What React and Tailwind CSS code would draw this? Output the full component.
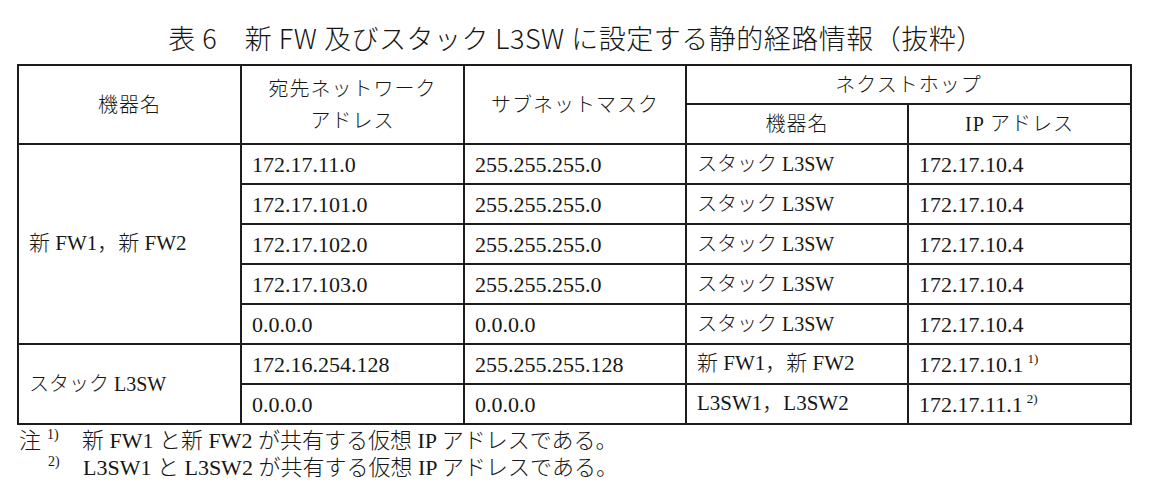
import React from "react";

const serif = "font-['Liberation_Serif','Noto_Sans_CJK_JP',serif]";

const rows = [
  ["172.17.11.0", "255.255.255.0", "スタック L3SW", "172.17.10.4"],
  ["172.17.101.0", "255.255.255.0", "スタック L3SW", "172.17.10.4"],
  ["172.17.102.0", "255.255.255.0", "スタック L3SW", "172.17.10.4"],
  ["172.17.103.0", "255.255.255.0", "スタック L3SW", "172.17.10.4"],
  ["0.0.0.0", "0.0.0.0", "スタック L3SW", "172.17.10.4"],
];

const l3Rows = [
  ["172.16.254.128", "255.255.255.128", "新 FW1，新 FW2", "172.17.10.1", "1)"],
  ["0.0.0.0", "0.0.0.0", "L3SW1，L3SW2", "172.17.11.1", "2)"],
];

const cell = "border-2 border-[#1c1c1c] px-[10px] text-left align-middle font-light";
const num = `${cell} text-[22px]`;
const name = `${cell} text-[20px]`;
const head = "border-2 border-[#1c1c1c] text-center align-middle font-light tracking-[1px] text-[20px]";

export default function App() {
  return (
    <div className={`w-[1152px] h-[496px] bg-white text-[#161616] ${serif}`}>
      {/* Title */}
      <h1 className="pt-[20px] h-[64px] text-center text-[27px] leading-[36px] font-light font-['Noto_Sans_CJK_JP',sans-serif] tracking-[0.5px]">
        表 6　新 FW 及びスタック L3SW に設定する静的経路情報（抜粋）
      </h1>

      <table className="ml-[17px] w-[1113px] border-collapse table-fixed">
        <colgroup>
          <col className="w-[223px]" />
          <col className="w-[223px]" />
          <col className="w-[222px]" />
          <col className="w-[222px]" />
          <col className="w-[223px]" />
        </colgroup>
        <thead>
          <tr className="h-[39px]">
            <th rowSpan={2} className={head}>機器名</th>
            <th rowSpan={2} className={`${head} leading-[32px]`}>
              宛先ネットワーク
              <br />
              アドレス
            </th>
            <th rowSpan={2} className={head}>サブネットマスク</th>
            <th colSpan={2} className={head}>ネクストホップ</th>
          </tr>
          <tr className="h-[40px]">
            <th className={head}>機器名</th>
            <th className={head}>IP アドレス</th>
          </tr>
        </thead>
        <tbody>
          {rows.map((r, i) => (
            <tr key={i} className="h-[40px]">
              {i === 0 && (
                <td rowSpan={5} className={`${name} text-[21px]`}>
                  新 FW1，新 FW2
                </td>
              )}
              <td className={num}>{r[0]}</td>
              <td className={num}>{r[1]}</td>
              <td className={name}>{r[2]}</td>
              <td className={num}>{r[3]}</td>
            </tr>
          ))}
          {l3Rows.map((r, i) => (
            <tr key={i} className="h-[40px]">
              {i === 0 && (
                <td rowSpan={2} className={name}>
                  スタック L3SW
                </td>
              )}
              <td className={num}>{r[0]}</td>
              <td className={num}>{r[1]}</td>
              <td className={`${name} text-[21px]`}>{r[2]}</td>
              <td className={num}>
                {r[3]}
                <sup className="ml-[4px] text-[13px] relative top-[-9px]">{r[4]}</sup>
              </td>
            </tr>
          ))}
        </tbody>
      </table>

      {/* Notes */}
      <div className="mt-[2px] text-[22px] leading-[27px] font-light">
        <div className="flex items-baseline">
          <span className="ml-[19px] w-[28px]">注</span>
          <sup className="text-[14px] w-[35px] relative top-[-9px]">1)</sup>
          <span>新 FW1 と新 FW2 が共有する仮想 IP アドレスである。</span>
        </div>
        <div className="flex items-baseline">
          <sup className="ml-[48px] text-[14px] w-[35px] relative top-[-9px]">2)</sup>
          <span>L3SW1 と L3SW2 が共有する仮想 IP アドレスである。</span>
        </div>
      </div>
    </div>
  );
}
